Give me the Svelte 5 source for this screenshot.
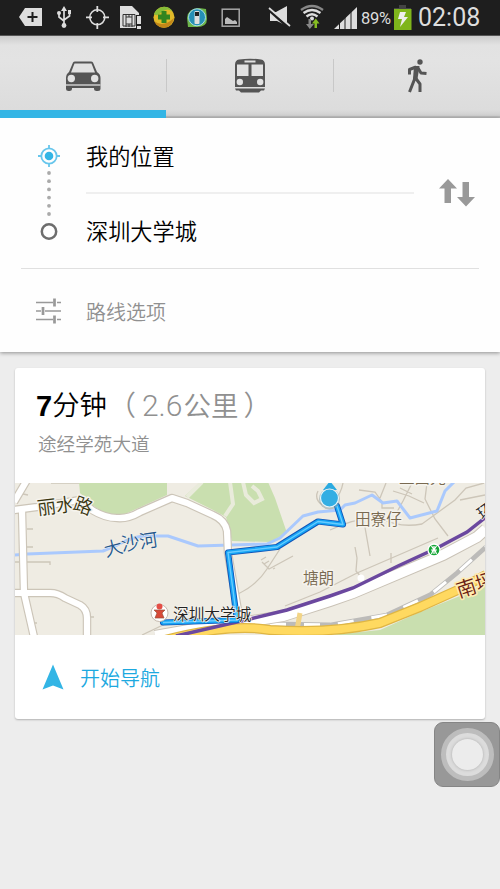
<script lang="ts">
    let mode = $state("car");
    let places = $state(["我的位置", "深圳大学城"]);

    const route = "M163 622.5L237 620L228 552.5L277 547L318 521.5L343 524.5L337 506";
    const purple = "M176 636L250 619L287 610L330 596L353 588L398 566L437 548L467 532L486 517";
    const river = "M14 555L27 554L103 551L117 545Q130 538 143 536H168L198 546L267 544L280 538L303 516L318 512L340 510L345 505L355 503L372 495L383 503L397 501L410 518L437 511L445 491L455 481";
    const roads = [
        "M14 510L37 507L80 500L92 510Q105 518 117 518Q128 519 140 512L172 498L187 503L213 515Q225 520 227 531L228 553L240 622",
        "M22 510L24 593L34 637",
        "M27 480L14 502",
        "M14 593H50Q58 593 65 598L80 605Q87 609 87 618V637",
    ];
    const highway = "M155 636L200 628L240 623L283 616L330 601L353 593L443 555L477 537L486 529";
    const yellow = "M165 640Q230 623 270 630Q330 634 380 623L420 607L460 589L486 575";
    const rail = "M270 624L330 625L387 615L430 595L457 573L486 547";

    function swap() {
        places = [places[1], places[0]];
    }
</script>

<div class="screen">
    <header class="status">
        <svg viewBox="0 0 50 35" width="50">
            <path d="M19 17L25 8H42V26H25Z" fill="#ddd" />
            <path d="M32.500 12V22M27.500 17H37.500" stroke="#1e1e1e" stroke-width="2" />
        </svg>
        <svg viewBox="50 0 28 35" width="28">
            <path d="M64 9V25M64 21L59 17V13M64 20L69.500 16V12" fill="none" stroke="#ddd" stroke-width="1.700" />
            <path d="M64 6L67 11H61ZM68 10H71V14H68Z" fill="#ddd" />
            <circle cx="59" cy="13" r="2" fill="#ddd" />
            <circle cx="64" cy="25.500" r="2.400" fill="#ddd" />
        </svg>
        <svg viewBox="78 0 37 35" width="37" fill="none" stroke="#ddd">
            <circle cx="97.300" cy="17.300" r="7.500" stroke-width="1.600" />
            <path d="M97.300 6V12M97.300 23V29M86 17.300H92M103 17.300H109" stroke-width="1.800" />
        </svg>
        <svg viewBox="115 0 32 35" width="32">
            <path d="M120 6H132L139 13V15H136V28H120Z" fill="#ddd" />
            <path d="M123 14.500H135V26H123ZM126 17H132V24H126ZM126 14V17M129 14V17M132 14V17M126 24V27M129 24V27M132 24V27" fill="none" stroke="#333" />
            <path d="M137 16H141V24H137ZM137 26H141V29H137Z" fill="#ddd" />
        </svg>
        <svg viewBox="147 0 34 35" width="34">
            <circle cx="164" cy="17.300" r="10.500" fill="#e2ba29" />
            <path d="M154 14A10.500 10.500 0 0 1 173 12Q168 7 162 12Q157 17 154 14Z" fill="#86bc39" />
            <path d="M154 21Q163 28 174 18Q172 27 164 28Q157 27 154 21Z" fill="#c38718" />
            <path d="M161.500 11H166.500V14.500H170V19.500H166.500V23H161.500V19.500H158V14.500H161.500Z" fill="#32851f" />
        </svg>
        <svg viewBox="181 0 33 35" width="33">
            <path d="M187 18Q188 8 199 8L206 9L207 19Q207 27 197 27L188 27Z" fill="#6db54a" />
            <circle cx="197" cy="17.300" r="8.500" fill="#258fb5" stroke="#a8dce6" />
            <rect x="194.500" y="11" width="5" height="13" rx="1" fill="#dedede" />
            <rect x="195" y="12" width="4" height="4" fill="#222" />
        </svg>
        <svg viewBox="214 0 48 35" width="48">
            <rect x="222.200" y="9.200" width="17" height="17" fill="none" stroke="#a7a7a7" stroke-width="1.500" />
            <path d="M225 23V19L227 17L230 19L233 21L235 20L237 22V24H225Z" fill="#bbb" />
        </svg>
        <svg viewBox="262 0 33 35" width="33">
            <path d="M270 12H276L287 6V26L277 21H270Z" fill="#ddd" />
            <path d="M269 10L289 28" stroke="#1e1e1e" stroke-width="3" />
            <path d="M269 8L290 26" stroke="#ddd" stroke-width="1.700" />
        </svg>
        <svg viewBox="295 0 34 35" width="34">
            <g fill="none" stroke="#ddd" stroke-width="2.300">
                <path d="M301 10Q312 2 323 10" stroke="#888" />
                <path d="M303.500 13Q312 7 320.500 13M306.500 16.500Q312 12 317.500 16.500" />
            </g>
            <circle cx="312" cy="18.500" r="2" fill="#ddd" />
            <path d="M308.500 19H311V24H314L309.800 29L306 24H308.500Z" fill="#888" />
            <path d="M314.500 28H317V23.500H319.500L315.800 18.500L312 23.500H314.500Z" fill="#86bd22" />
        </svg>
        <svg viewBox="329 0 31 35" width="31">
            <path d="M334 29L357 7V29Z" fill="#ddd" />
            <path d="M339.500 10V30M345 10V30M351 7V30" stroke="#1e1e1e" />
        </svg>
        <span class="percent">89%</span>
        <svg viewBox="393 0 23 35" width="23">
            <path d="M399 5H406V8H411V10H394V8H399Z" fill="#444" />
            <rect x="394" y="9" width="17.500" height="21" fill="#7fb51b" />
            <path d="M400 12H406L404 17H408L400 27L402 19H398Z" fill="#eee" />
        </svg>
        <span class="clock">02:08</span>
    </header>

    <nav class="tabs">
        <button class:active={mode === "car"} onclick={() => (mode = "car")} aria-label="驾车">
            <svg viewBox="0 0 36 32" width="36" height="32">
                <path d="M8 1.500Q8.600 .5 10 .5H26Q27.400 .5 28 1.500L32 11Q35.500 13 35.500 17V28Q35.500 30 33 30H31.500Q29 30 29 28V27H7V28Q7 30 4.500 30H3.500Q1 30 1 28V17Q1 13 4 11Z" fill="#555" />
                <path d="M9.500 2.500H26.500L30 11.500H6Z" fill="#e2e2e2" />
                <circle cx="6.300" cy="17.500" r="3.700" fill="#e2e2e2" />
                <circle cx="29.700" cy="17.500" r="3.700" fill="#e2e2e2" />
                <path d="M1 24H35.500" stroke="#ccc" stroke-width="1.400" />
            </svg>
        </button>
        <button class:active={mode === "bus"} onclick={() => (mode = "bus")} aria-label="公交">
            <svg viewBox="0 0 34 36" width="34" height="36">
                <path d="M6 1.500Q17 0 28 1.500Q32 2 32 7V29H2V7Q2 2 6 1.500ZM2 30.500H32L31 32.500H28L26 34.500H8L6 32.500H3Z" fill="#555" />
                <path d="M11.500 2.500H22.500V4.500H11.500ZM4 6.500H15.500V18H4ZM18.500 6.500H30V18H18.500Z" fill="#e2e2e2" />
                <circle cx="6.800" cy="24" r="3.200" fill="#e2e2e2" />
                <circle cx="27.200" cy="24" r="3.200" fill="#e2e2e2" />
            </svg>
        </button>
        <button class:active={mode === "walk"} onclick={() => (mode = "walk")} aria-label="步行">
            <svg viewBox="0 0 20 34" width="20" height="34">
                <circle cx="13" cy="3" r="2.700" fill="#555" />
                <path d="M10.500 8L8 19L2.500 33M8.500 19L13 25V33M9 8L2.500 10.500V15.500M11 9L14 14L19.500 14.500" fill="none" stroke="#555" stroke-width="3" stroke-linejoin="round" />
                <path d="M7 7H12.500L10.500 20H6Z" fill="#555" />
            </svg>
        </button>
    </nav>

    <section class="planner">
        <div class="places">
            <svg class="rail" viewBox="0 0 24 100" width="24" height="100">
                <circle cx="12" cy="12" r="7.700" fill="none" stroke="#67c6ec" stroke-width="1.800" />
                <circle cx="12" cy="12" r="4.300" fill="#33b5e5" />
                <path d="M12 1V5M12 19V23M1 12H5M19 12H23" stroke="#67c6ec" stroke-width="1.800" />
                {#each [0, 1, 2, 3, 4, 5] as i}
                    <circle cx="12" cy={29 + i * 8.2} r="1.900" fill="#aaa" />
                {/each}
                <circle cx="12" cy="87.500" r="7.200" fill="none" stroke="#6d6d6d" stroke-width="2.500" />
            </svg>
            <div class="fields">
                <div class="place first">{places[0]}</div>
                <div class="place">{places[1]}</div>
            </div>
            <button class="swap" onclick={swap} aria-label="交换">
                <svg viewBox="0 0 38 30" width="38" height="30" fill="#999">
                    <path d="M10 1L19 10.500H13V25H6.500V10.500H1Z" />
                    <path d="M24.500 4H31V19H37L28 28.500L19 19H24.500Z" />
                </svg>
            </button>
        </div>
        <div class="options">
            <svg viewBox="0 0 26 26" width="26" height="26" stroke="#999" fill="none">
                <path d="M0 4.500H17M21 4.500H25M0 13H5M9 13H25M0 21.500H17M21 21.500H25" stroke-width="1.500" />
                <path d="M18.500 .5V8.500M7 9V17M18.500 17.500V25.500" stroke-width="2.700" />
            </svg>
            <span>路线选项</span>
        </div>
    </section>

    <section class="card">
        <div class="summary">
            <h2><b>7</b>分钟<span class="distance"><i class="open">（</i><em>2.6</em>公里<i class="close">）</i></span></h2>
            <p>途经学苑大道</p>
        </div>

        <svg class="map" viewBox="15 483 470 152" width="470" height="152">
            <rect x="15" y="483" width="470" height="152" fill="#efece3" />
            <!-- parks -->
            <g fill="#c9dfaf">
                <path d="M79 482L80 493L92 505L107 515H123L167 495V482Z" />
                <path d="M200 482L185 496L213 510L226 517L232 541L270 542L287 533L275 498L268 482Z" />
                <path d="M320 636L380 630L420 612L460 596L486 583V636Z" />
            </g>
            <path d="M230 482L233 504L225 516M243 482L246 495L254 503L262 499L258 491L252 486M202 482L187 497" fill="none" stroke="#e9ebdb" stroke-width="4" />
            <!-- lanes -->
            <g fill="none" stroke="#cdc6b9" stroke-width="1.300">
                <path d="M51 483H79M27 529H33M27 547H33M15 562H50V565M23 494L28 495M89 617H94M34 623H37" />
                <path d="M238 594Q257 585 267 569L280 549M262 562L269 569L293 556M261 560L266 557M264 564L269 561M273 569L275 568" />
                <path d="M343 483Q341 494 334 501M318 491Q314 499 322 505M359 490L375 492L382 502V508H394M386 483L380 498M393 491L409 496L424 503M412 483L403 501L397 512M427 483L425 499L435 519L448 536M400 488L412 494M484 483L466 488L455 500L422 524Q400 528 382 519Q360 516 330 530M363 516L370 556M355 547L357 558L356 571L361 577M391 553V563M485 495L460 500" />
                <path d="M285 606L320 592L357 573L438 538M290 612L325 599" />
                <path d="M142 635L190 612" />
            </g>
            <path d={river} fill="none" stroke="#aac9fd" stroke-width="3" stroke-linejoin="round" />
            <!-- railway -->
            <path d={rail} fill="none" stroke="#bcbbb9" stroke-width="4.800" />
            <path d={rail} fill="none" stroke="#fff" stroke-width="3" stroke-dasharray="16 18" />
            <!-- streets -->
            {#each roads as d}
                <path {d} fill="none" stroke="#ccc5b8" stroke-width="8.500" stroke-linejoin="round" />
            {/each}
            <path d={highway} fill="none" stroke="#c9c2b6" stroke-width="12" />
            {#each roads as d}
                <path {d} fill="none" stroke="#fff" stroke-width="6.200" stroke-linejoin="round" />
            {/each}
            <path d={highway} fill="none" stroke="#fff" stroke-width="10" />
            <circle cx="361" cy="578" r="3.500" fill="#fff" />
            <path d="M300 613L297 630" stroke="#f2d486" stroke-width="5" />
            <path d={yellow} fill="none" stroke="#dfb644" stroke-width="10" stroke-linejoin="round" />
            <path d={yellow} fill="none" stroke="#ffd960" stroke-width="7.500" stroke-linejoin="round" />
            <path d={purple} fill="none" stroke="#6b489f" stroke-width="3.500" />

            <path d={route} fill="none" stroke="#1055b8" stroke-width="6.200" stroke-linejoin="round" stroke-linecap="round" />
            <path d={route} fill="none" stroke="#16a5f5" stroke-width="4.400" stroke-linejoin="round" stroke-linecap="round" />
            <path d={route} fill="none" stroke="#6accff" stroke-width="1.400" stroke-linejoin="round" />

            <!-- destination and current position -->
            <circle cx="159.500" cy="613" r="8.500" fill="#fff" stroke="#c5b9ae" />
            <circle cx="159.500" cy="606.500" r="3" fill="#e44e46" />
            <path d="M154 610H165L162 613L164 618H155L157 613Z" fill="#d84a39" stroke="#985139" stroke-width=".7" />
            <path d="M323 490L330 481L337 490Z" fill="#2aaae0" />
            <circle cx="329.500" cy="499" r="10.500" fill="#8c9fa4" opacity=".55" />
            <circle cx="329.500" cy="498" r="9" fill="#33aee3" stroke="#e6f5fa" stroke-width="1.200" />
            <circle cx="434" cy="550" r="6" fill="#14a536" stroke="#fff" stroke-width="1.300" />
            <path d="M431.500 546L433.500 549L431.500 554M436.500 546L434.500 549L436.500 554M434 546V554M431 550H437" fill="none" stroke="#fff" stroke-width="1.200" />

            <g class="labels">
                <text class="street" transform="translate(38 515) rotate(-7)">丽水</text>
                <text class="street" transform="translate(72 509) rotate(20)">路</text>
                <text class="water" transform="translate(106 557) rotate(-15)">大</text>
                <text class="water" transform="translate(122 551) rotate(-8)">沙河</text>
                <text class="area" x="355" y="525">田寮仔</text>
                <text class="area" x="303" y="584">塘朗</text>
                <text class="area" x="399" y="483">上面光</text>
                <text class="poi" x="173" y="620">深圳大学城</text>
                <text class="major" transform="translate(459 598) rotate(-18)">南坪</text>
                <text class="poi" transform="translate(482 520) rotate(-35)">环</text>
            </g>
        </svg>

        <button class="navigate">
            <svg viewBox="0 0 22 26" width="22" height="26"><path d="M11 .5L21.500 25.500L11 21.500L.5 25.500Z" fill="#33b5e5" /></svg>
            <span>开始导航</span>
        </button>
    </section>

    <div class="assist"><div class="ring"><div class="dot"></div></div></div>
</div>

<style>
    :global(body) {
        margin: 0;
        background: #ededed;
    }
    .screen {
        position: relative;
        width: 500px;
        height: 889px;
        overflow: hidden;
        background: #ededed;
        font-family: Roboto, "Noto Sans CJK SC", sans-serif;
        font-weight: 350;
    }
    svg {
        display: block;
        flex: none;
    }
    button {
        border: none;
        padding: 0;
        background: none;
        font: inherit;
    }
    .status {
        display: flex;
        height: 35px;
        background: #1e1e1e;
        color: #ddd;
        font-weight: 400;
        line-height: 35px;
    }
    .status svg {
        height: 35px;
    }
    .percent {
        width: 32px;
        padding-left: 1px;
        font-size: 16.5px;
        line-height: 37px;
        letter-spacing: -0.3px;
    }
    .clock {
        padding-left: 2px;
        font-size: 25px;
    }
    .tabs {
        display: flex;
        box-sizing: border-box;
        height: 83px;
        background: linear-gradient(#cbcbcb, #e2e2e2 9px, #e3e3e3 25px, #dcdcdc 74px, #cecece);
        border-top: 1px solid #555;
        border-bottom: 2px solid #bcbcbc;
    }
    .tabs button {
        display: flex;
        box-sizing: border-box;
        width: 166px;
        height: 82px;
        align-items: center;
        justify-content: center;
        border-bottom: 8px solid transparent;
    }
    .tabs button:first-child svg {
        margin: 8px 1px 0 0;
    }
    .tabs button:nth-child(2) {
        padding-top: 6px;
        width: 168px;
        background:
            linear-gradient(#c8c8c8, #c8c8c8) left 23px / 1px 33px no-repeat,
            linear-gradient(#c8c8c8, #c8c8c8) right 23px / 1px 33px no-repeat;
    }
    .tabs button:last-child {
        padding-top: 6px;
    }
    .tabs button.active {
        border-bottom-color: #33b5e5;
    }
    .planner {
        box-sizing: border-box;
        height: 234px;
        background: #fefefe;
        box-shadow: 0 1px 4px rgba(0, 0, 0, 0.4);
    }
    .places {
        display: flex;
        height: 150px;
        margin: 0 21px;
        border-bottom: 1px solid #e0e0e0;
    }
    .rail {
        margin: 26px 25px 0 16px;
    }
    .fields {
        width: 328px;
        font-size: 22.2px;
        color: #000;
    }
    .place {
        height: 74px;
        line-height: 76px;
    }
    .place.first {
        line-height: 78px;
        border-bottom: 2px solid #efefef;
    }
    .swap {
        margin: 0 0 0 24px;
    }
    .options {
        display: flex;
        align-items: center;
        gap: 24px;
        height: 83px;
        padding: 1px 0 0 36px;
        box-sizing: border-box;
        font-size: 20px;
        color: #909090;
    }
    .card {
        width: 470px;
        height: 351px;
        margin: 16px 0 0 15px;
        border-radius: 3px;
        background: #fff;
        box-shadow: 0 1px 2px rgba(0, 0, 0, 0.25);
    }
    .summary {
        height: 115px;
        padding: 18px 0 0 21px;
        box-sizing: border-box;
    }
    h2 {
        display: flex;
        margin: 0;
        font-size: 27.4px;
        font-weight: 350;
        line-height: 40px;
        color: #000;
    }
    h2 b {
        font-family: "Liberation Sans", sans-serif;
        font-weight: 700;
        font-size: 29px;
    }
    .distance {
        color: #909090;
        font-size: 27.5px;
    }
    .distance i {
        font-style: normal;
        font-size: 28px;
    }
    .distance em {
        font-style: normal;
        font-size: 30px;
        margin-right: 1px;
    }
    .open {
        margin: 0 6px 0 1px;
    }
    .close {
        margin-left: 5px;
    }
    p {
        margin: 5px 0 0 2px;
        font-size: 18.6px;
        line-height: 26px;
        color: #909090;
    }
    .labels {
        font-family: "Noto Sans CJK SC", sans-serif;
        font-weight: 350;
        paint-order: stroke;
        stroke: #f5f3ed;
        stroke-width: 3px;
        stroke-linejoin: round;
    }
    .street {
        font-size: 19px;
        fill: #37350f;
    }
    .water {
        font-size: 18.5px;
        fill: #23578d;
        stroke-width: 1px;
    }
    .area {
        font-size: 15.6px;
        fill: #796a51;
    }
    .poi {
        font-size: 15.7px;
        fill: #222;
        stroke-width: 1.5px;
    }
    .major {
        font-size: 20px;
        fill: #6b1d13;
        stroke: #ffebb0;
    }
    .navigate {
        display: flex;
        align-items: center;
        gap: 16px;
        height: 84px;
        padding-left: 27px;
        font-size: 20px;
        color: #1da9df;
    }
    /* floating touch button drawn over every screen */
    .assist {
        position: absolute;
        left: 434px;
        top: 722px;
        display: grid;
        place-items: center;
        width: 66px;
        height: 65px;
        border: 1px solid #858585;
        box-sizing: border-box;
        border-radius: 9px;
        background: #989898;
    }
    .ring {
        display: grid;
        place-items: center;
        box-sizing: border-box;
        width: 53px;
        height: 53px;
        border: 5px solid #bdbdbd;
        border-radius: 50%;
        background: #dcdcdc;
    }
    .dot {
        width: 31px;
        height: 31px;
        border-radius: 50%;
        background: #ececec;
        box-shadow: 0 0 3px #aaa;
    }
</style>
